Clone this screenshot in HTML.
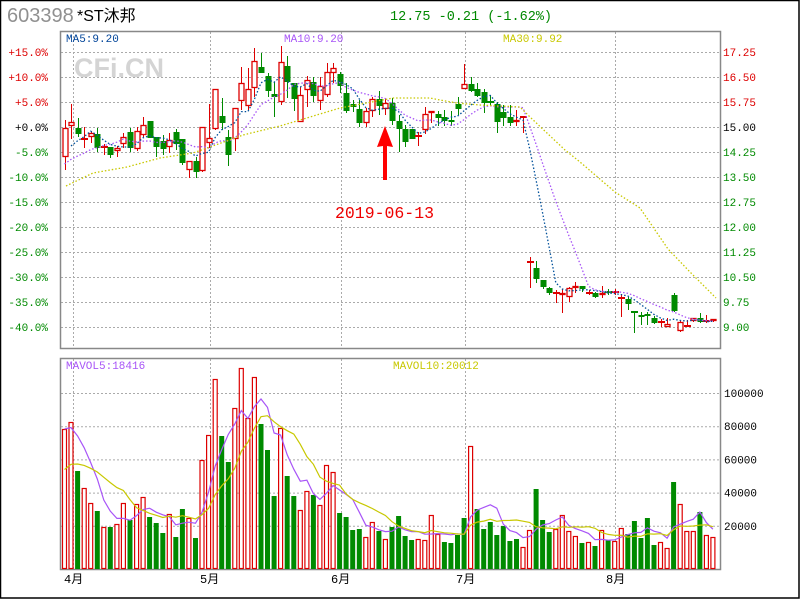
<!DOCTYPE html>
<html><head><meta charset="utf-8"><style>
html,body{margin:0;padding:0;background:#fff;}
#w{position:relative;width:800px;height:600px;overflow:hidden;background:#fff;}
svg{position:absolute;left:0;top:0;}
text{font-family:"Liberation Mono","Noto Sans CJK SC",monospace;}
</style></head><body><div id="w">
<svg id="s" width="800" height="600" xmlns="http://www.w3.org/2000/svg">
<rect x="0.5" y="0.5" width="798.5" height="597.5" fill="none" stroke="#000" stroke-width="1.5"/>
<text x="7" y="22" font-family="Liberation Sans,sans-serif" font-size="20" fill="#909090" style="font-family:'Liberation Sans',sans-serif">603398</text>
<text x="77" y="21" font-size="16" fill="#000" style="font-family:'Liberation Sans','Noto Sans CJK SC',sans-serif">*ST沐邦</text>
<text x="390" y="20" font-size="13.5" fill="#008800">12.75 -0.21 (-1.62%)</text>
<text x="74" y="77" font-size="27" font-weight="bold" fill="#d4d4d4" style="font-family:'Liberation Sans',sans-serif">CFi.CN</text>
<g id="grid"></g>
<rect x="60.5" y="31.5" width="660" height="317" fill="none" stroke="#888" stroke-width="1.5"/>
<rect x="60.5" y="358.5" width="660" height="211" fill="none" stroke="#888" stroke-width="1.5"/>
<text x="66" y="42" font-size="11" fill="#004499">MA5:9.20</text>
<text x="284" y="42" font-size="11" fill="#a855f7">MA10:9.20</text>
<text x="503" y="42" font-size="11" fill="#c8c800">MA30:9.92</text>
<text x="66" y="369" font-size="11" fill="#a855f7">MAVOL5:18416</text>
<text x="393" y="369" font-size="11" fill="#c8c800">MAVOL10:20012</text>
<g id="lab" font-size="11"></g>
<g id="vol"></g>
<g id="can"></g>
<g id="ma"></g>
<polygon points="385,126 393,147 387,146 387,180 383,180 383,146 377,147" fill="#f00"/>
<text x="335" y="218" font-size="16.5" fill="#e00" style="font-family:'Liberation Mono',monospace">2019-06-13</text>
<g font-size="12" fill="#000" style="font-family:'Liberation Sans','Noto Sans CJK SC',sans-serif">
<text x="64" y="583">4月</text><text x="200" y="583">5月</text><text x="331" y="583">6月</text><text x="456" y="583">7月</text><text x="606" y="583">8月</text>
</g>
</svg>
<script>
var NS="http://www.w3.org/2000/svg";
function el(p,t,a){var e=document.createElementNS(NS,t);for(var k in a)e.setAttribute(k,a[k]);p.appendChild(e);return e;}
var s=document.getElementById('s'),G=document.getElementById('grid'),L=document.getElementById('lab');
var RED="#dd0000",GRN="#008a00";
// grid
[73,210,341,465,615].forEach(function(x){el(G,'line',{x1:x+.5,y1:32,x2:x+.5,y2:348,stroke:"#aaa","stroke-dasharray":"2,2"});el(G,'line',{x1:x+.5,y1:359,x2:x+.5,y2:569,stroke:"#aaa","stroke-dasharray":"2,2"});});
var pl=["+15.0%","+10.0%","+5.0%","+0.0%","-5.0%","-10.0%","-15.0%","-20.0%","-25.0%","-30.0%","-35.0%","-40.0%"];
var pr=["17.25","16.50","15.75","15.00","14.25","13.50","12.75","12.00","11.25","10.50","9.75","9.00"];
for(var i=0;i<12;i++){var y=52+25*i;el(G,'line',{x1:61,y1:y+.5,x2:720,y2:y+.5,stroke:"#aaa","stroke-dasharray":"2,2"});
var c=i<3?RED:(i==3?"#000":GRN);
var t=el(L,'text',{x:48,y:y+4,"text-anchor":"end",fill:c});t.textContent=pl[i];
var t2=el(L,'text',{x:723,y:y+4,fill:c});t2.textContent=pr[i];}
var vl=["100000","80000","60000","40000","20000"];
for(var i=0;i<5;i++){var y=393+33.2*i;el(G,'line',{x1:61,y1:y+.5,x2:720,y2:y+.5,stroke:"#aaa","stroke-dasharray":"2,2"});var t=el(L,'text',{x:724,y:y+4,fill:"#000"});t.textContent=vl[i];}
// volumes: [top,color]
var V=[[429,'r'],[422,'r'],[471,'g'],[488,'r'],[503,'r'],[511,'g'],[527,'r'],[527,'g'],[524,'r'],[503,'r'],[520,'g'],[504,'r'],[497,'r'],[517,'g'],[523,'g'],[533,'g'],[514,'r'],[537,'g'],[509,'g'],[518,'r'],[538,'g'],[460,'r'],[435,'r'],[379,'r'],[436,'g'],[462,'g'],[408,'r'],[368,'r'],[418,'r'],[377,'r'],[424,'g'],[450,'g'],[496,'g'],[428,'r'],[476,'g'],[496,'g'],[510,'r'],[491,'r'],[495,'g'],[505,'r'],[465,'r'],[472,'r'],[513,'g'],[517,'g'],[530,'g'],[529,'g'],[537,'r'],[522,'r'],[531,'g'],[539,'r'],[527,'g'],
[516,'g'],[536,'g'],[540,'g'],[539,'r'],[540,'r'],[515,'r'],[534,'r'],[542,'g'],[543,'g'],[535,'g'],[518,'g'],[446,'r'],[509,'g'],[529,'g'],[522,'g'],[535,'g'],[526,'g'],[541,'g'],[539,'g'],[547,'r'],[530,'r'],[489,'g'],[520,'g'],[532,'g'],[529,'r'],[515,'r'],[531,'r'],[536,'r'],[543,'g'],[542,'r'],[546,'g'],[530,'r'],[540,'g'],[541,'r'],[528,'r'],[534,'g'],[521,'g'],[538,'g'],[518,'g'],[545,'g'],[542,'r'],[548,'r'],[482,'g'],[504,'r'],[531,'r'],[531,'r'],[512,'g'],[535,'r'],[537,'r']];
function X(i){return 64.5+6.55*i;}
var VG=document.getElementById('vol');
V.forEach(function(v,i){var x=X(i);if(v[1]=='r')el(VG,'rect',{x:(x-2).toFixed(1),y:v[0]+.5,width:4,height:569-v[0]-1,fill:"#fff",stroke:RED,"stroke-width":1.2});else el(VG,'rect',{x:(x-2.5).toFixed(1),y:v[0],width:5,height:569-v[0],fill:GRN});});
// candles [bodyTop,bodyBot,hi,lo,color]
var C=[[128,157,120,170,'r'],[122,126,104,139,'r'],[128,134,118,137,'g'],[139,139,127,148,'r'],[133,137,131,143,'r'],[134,148,128,152,'g'],[147,147,144,155,'r'],[147,155,147,158,'g'],[148,151,146,157,'r'],[137,144,133,148,'r'],
[132,148,128,152,'g'],[131,149,127,151,'r'],[125,135,117,137,'r'],[121,138,121,138,'g'],[137,147,137,157,'g'],[141,149,135,155,'g'],[140,147,133,153,'r'],[132,144,129,150,'g'],[139,163,139,165,'g'],[161,170,161,178,'r'],
[161,172,157,178,'g'],[127,171,127,172,'r'],[138,143,104,148,'r'],[89,129,89,130,'r'],[116,123,98,130,'g'],[137,155,130,166,'g'],[108,139,108,151,'r'],[83,101,67,110,'r'],[89,106,68,110,'r'],[61,88,48,97,'r'],
[67,73,53,73,'g'],[76,91,73,97,'g'],[94,97,82,117,'g'],[62,102,46,105,'r'],[66,82,56,98,'g'],[83,99,83,111,'g'],[95,122,87,122,'r'],[80,90,76,107,'r'],[82,96,77,102,'g'],[86,101,77,110,'r'],
[72,95,63,97,'r'],[68,73,63,83,'r'],[74,86,72,93,'g'],[93,111,83,113,'g'],[104,107,100,112,'g'],[109,123,100,127,'g'],[111,123,108,127,'r'],[99,111,97,117,'r'],[99,106,91,115,'g'],[103,109,98,115,'r'],
[103,121,98,125,'g'],[121,129,115,152,'g'],[129,142,125,147,'g'],[129,139,129,139,'g'],[136,136,132,146,'r'],[114,130,107,134,'r'],[111,113,111,123,'r'],[114,118,111,126,'g'],[117,121,110,126,'g'],[120,122,111,126,'g'],
[104,109,97,115,'g'],[84,89,64,89,'r'],[84,91,77,92,'g'],[89,96,83,97,'g'],[92,103,89,113,'g'],[102,103,95,105,'g'],[104,122,102,133,'g'],[112,118,105,126,'g'],[117,123,105,126,'g'],[120,122,110,126,'r'],
[117,117,117,133,'r'],[262,262,257,288,'r'],[268,279,261,283,'g'],[280,287,280,289,'g'],[288,293,287,295,'g'],[293,293,290,303,'r'],[293,295,289,313,'r'],[288,297,287,302,'r'],[286,288,282,293,'r'],[286,289,286,292,'g'],
[293,293,290,295,'r'],[293,297,292,298,'g'],[293,295,286,298,'r'],[292,293,289,295,'g'],[292,292,289,295,'r'],[298,298,294,317,'r'],[299,304,297,310,'g'],[312,312,312,333,'g'],[315,317,312,325,'g'],[314,316,312,325,'g'],
[318,323,316,324,'g'],[322,322,319,327,'r'],[324,327,318,327,'r'],[295,311,293,312,'g'],[322,331,320,332,'r'],[326,326,320,327,'r'],[318,321,318,322,'r'],[318,322,313,323,'g'],[321,321,315,323,'r'],[319,321,319,322,'r']];
var CG=document.getElementById('can');var cl=[];
C.forEach(function(c,i){var x=Math.round(X(i))+.5,col=c[4]=='r'?RED:GRN;
el(CG,'line',{x1:x,y1:c[2],x2:x,y2:c[3],stroke:col,"stroke-width":1});
var h=c[1]-c[0];
if(h<2)el(CG,'rect',{x:x-3.5,y:c[0]-1,width:7,height:2,fill:col});
else if(c[4]=='r')el(CG,'rect',{x:x-2.5,y:c[0]+.5,width:5,height:h-1,fill:"#fff",stroke:col,"stroke-width":1.3});
else el(CG,'rect',{x:x-3,y:c[0],width:6,height:h,fill:col});
cl.push(c[4]=='r'?c[0]:c[1]);});
var M=document.getElementById('ma');
function ma(arr,n,pad){var out=[];for(var i=0;i<arr.length;i++){var s2=0;for(var k=i-n+1;k<=i;k++)s2+=k<0?pad:arr[k];out.push(s2/n);}return out;}
function line(ys,col,dash,start){var p=[];for(var i=start||0;i<ys.length;i++)p.push(X(i).toFixed(1)+","+ys[i].toFixed(1));el(M,'polyline',{points:p.join(" "),fill:"none",stroke:col,"stroke-width":1.3,"stroke-dasharray":dash||"none"});}
line(ma(cl,5,160),"#00509a","1.5,2",1);
line(ma(cl,10,168),"#a855f7","1.5,2",0);
el(M,'polyline',{points:"66,186 93,173 127,167 160,158 193,153 210,147 243,135 280,126 340,108 393,98 430,98 440,100 457,103 480,105 520,107 530,117 548,134 565,150 580,162 615,192 640,208 668,249 690,272 716,298",fill:"none",stroke:"#c8c800","stroke-width":1.3,"stroke-dasharray":"1.5,2"});
var vh=V.map(function(v){return 569-v[0];});
function vline(ys,col){var p=[];for(var i=0;i<ys.length;i++)p.push(X(i).toFixed(1)+","+(569-ys[i]).toFixed(1));el(M,'polyline',{points:p.join(" "),fill:"none",stroke:col,"stroke-width":1.2});}
vline(ma(vh,5,140),"#a855f7");
vline(ma(vh,10,95),"#c8c800");
</script>
</div></body></html>
